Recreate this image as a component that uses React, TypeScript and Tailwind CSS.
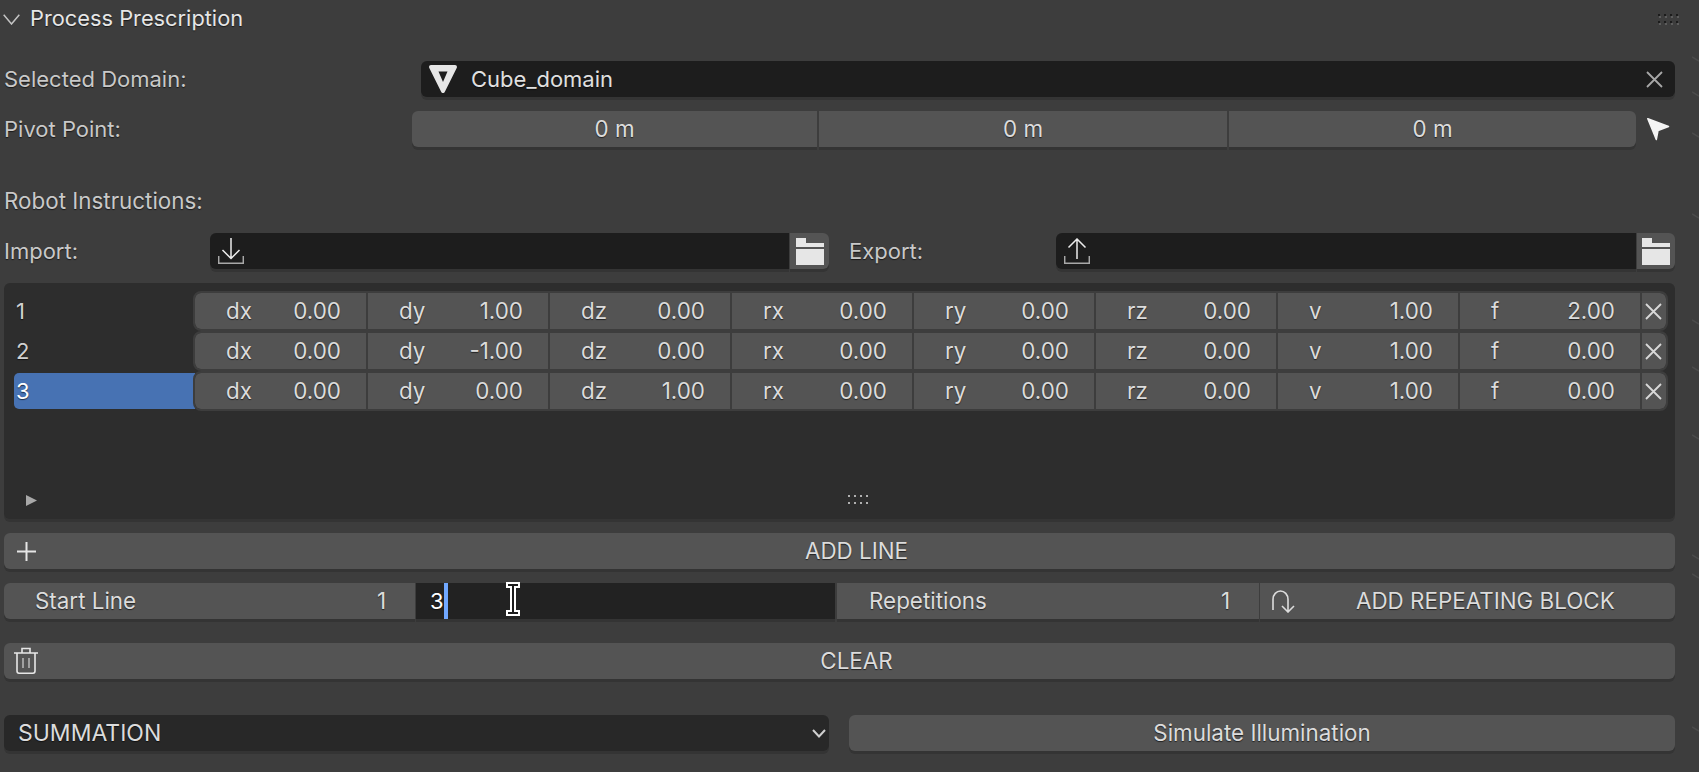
import type { ReactNode } from 'react'

const rows = [
  { n: '1', v: ['0.00', '1.00', '0.00', '0.00', '0.00', '0.00', '1.00', '2.00'] },
  { n: '2', v: ['0.00', '-1.00', '0.00', '0.00', '0.00', '0.00', '1.00', '0.00'] },
  { n: '3', v: ['0.00', '0.00', '1.00', '0.00', '0.00', '0.00', '1.00', '0.00'], active: true },
]
const names = ['dx', 'dy', 'dz', 'rx', 'ry', 'rz', 'v', 'f']

const shadow = '[text-shadow:0_1px_1px_rgba(0,0,0,0.6)]'
const btn = 'bg-[#545454] shadow-[0_3px_0_#343434] text-[#dcdcdc] text-[22.4px] h-9 flex items-center'
const field = 'bg-[#1d1d1d] shadow-[0_3px_0_#343434] h-9 flex items-center'

const Cross = ({ color = '#d8d8d8' }: { color?: string }) => (
  <svg width="17" height="17" viewBox="0 0 17 17" fill="none" stroke={color} strokeWidth="1.8"><path d="M1 1L16 16M16 1L1 16" /></svg>
)

const Folder = () => (
  <svg width="28" height="27" viewBox="0 0 28 27" fill="#e6e6e6">
    <path d="M0 0H10V5H28V9H0Z" />
    <rect y="11" width="28" height="16" />
  </svg>
)

const Transfer = ({ up }: { up?: boolean }) => (
  <svg width="26" height="26" viewBox="0 0 26 26" fill="none" strokeWidth="1.5">
    <path d={up ? 'M13 21V1M4.5 9.5L13 1L21.5 9.5' : 'M13 0V20M4.5 12L13 20.5L21.5 12'} stroke="#ececec" />
    <path d="M.7 18V25.2H25.3V18" stroke="#a8a8a8" />
  </svg>
)

const Grip = ({ color, under }: { color: string; under?: string }) => (
  <svg width="22" height="11" viewBox="0 0 22 11">
    {[0, 6, 12, 18].map(x => [0, 7].map(y => (
      <g key={`${x}-${y}`}>
        {under && <rect x={x + 1} y={y + 2} width="2" height="2" fill={under} />}
        <rect x={x} y={y} width="2" height="2" fill={color} />
      </g>
    )))}
  </svg>
)

const Label = ({ children, width }: { children: ReactNode; width: string }) => (
  <div className={`${width} shrink-0 text-[#c9c9c9] ${shadow}`}>{children}</div>
)

export default function App() {
  return (
    <div className="relative w-[1699px] h-[772px] overflow-hidden bg-[#3d3d3d] font-['Inter','Liberation_Sans',sans-serif] text-[22px] leading-none">
      {/* panel header */}
      <div className="h-[38px] pl-[3px] pr-[19px] flex items-center text-[#e6e6e6]">
        <svg width="17" height="11" viewBox="0 0 17 11" fill="none" stroke="#c4c4c4" strokeWidth="1.5"><path d="M.7.7L8.5 10L16.3.7" /></svg>
        <span className={`ml-[10px] text-[21.8px] ${shadow}`}>Process Prescription</span>
        <div className="ml-auto"><Grip color="#1c1c1c" under="#5c5c5c" /></div>
      </div>

      <div className="pl-1 pr-6">
        {/* domain */}
        <div className="mt-[23px] flex items-center">
          <Label width="w-[417px]">Selected Domain:</Label>
          <div className={`${field} flex-1 rounded-[6px] pl-2 pr-[12px] text-[#e0e0e0]`}>
            <svg width="28" height="28" viewBox="0 0 28 28" fill="#e6e6e6"><path fillRule="evenodd" d="M2 0H26C27.6 0 28.4 1.6 27.7 3L16 26.5C15 28.5 13 28.5 12 26.5L.3 3C-.4 1.6.4 0 2 0ZM9.5 6.5L14 17L18.5 6.5Z" /></svg>
            <span className={`ml-[14px] ${shadow}`}>Cube_domain</span>
            <div className="ml-auto"><Cross color="#a8a8a8" /></div>
          </div>
        </div>

        {/* pivot */}
        <div className="mt-[14px] flex items-center">
          <Label width="w-[408px]">Pivot Point:</Label>
          <div className="w-[1224px] flex gap-[2px]">
            <div className={`${btn} w-[405px] rounded-l-[6px] justify-center ${shadow}`}>0 m</div>
            <div className={`${btn} w-[408px] justify-center ${shadow}`}>0 m</div>
            <div className={`${btn} flex-1 rounded-r-[6px] justify-center ${shadow}`}>0 m</div>
          </div>
          <svg className="ml-[11px] mt-[1px]" width="23" height="23" viewBox="0 0 23 23" fill="#f4f4f4" stroke="#f4f4f4" strokeWidth="1.5" strokeLinejoin="round"><path d="M.8.8L21.5 8.5L11 12.5L9.3 21.5Z" /></svg>
        </div>

        <div className={`mt-[36px] h-9 flex items-center text-[#c9c9c9] text-[22.4px] ${shadow}`}>Robot Instructions:</div>

        {/* import / export */}
        <div className="mt-[14px] flex items-center">
          <Label width="w-[206px]">Import:</Label>
          <div className={`${field} w-[579px] rounded-l-[6px] pl-2`}><Transfer /></div>
          <div className={`${btn} w-[39px] ml-[1px] rounded-r-[6px] justify-center`}><Folder /></div>
          <Label width="w-[207px] ml-[20px]">Export:</Label>
          <div className={`${field} w-[580px] rounded-l-[6px] pl-2`}><Transfer up /></div>
          <div className={`${btn} flex-1 ml-[1px] rounded-r-[6px] justify-center`}><Folder /></div>
        </div>

        {/* list */}
        <div className="mt-[14px] h-[236px] rounded-[6px] bg-[#2d2d2d] shadow-[0_3px_0_#343434] pt-[10px] pl-[10px] pr-[9px] flex flex-col">
          <div className="flex flex-col gap-[4px]">
            {rows.map(r => (
              <div key={r.n} className="flex h-9">
                <div className={`w-[181px] rounded-l-[5px] flex items-center pl-[2px] ${shadow} ${r.active ? 'bg-[#4772b3] text-white' : 'text-[#d0d0d0]'}`}>{r.n}</div>
                <div className="flex-1 flex rounded-[6px] overflow-hidden outline-2 outline-[#3d3d3d] bg-[#3d3d3d] gap-[2px] text-[22.4px]">
                  {names.map((name, i) => (
                    <div key={name} className={`${i === 0 ? 'w-[171px]' : 'w-[180px]'} bg-[#545454] text-[#dcdcdc] flex items-center justify-between pl-[31px] pr-[25px] ${shadow}`}>
                      <span>{name}</span>
                      <span>{r.v[i]}</span>
                    </div>
                  ))}
                  <div className="flex-1 bg-[#545454] flex items-center justify-center pr-[1px]"><Cross /></div>
                </div>
              </div>
            ))}
          </div>
          <div className="mt-auto h-[38px] flex items-center pl-3">
            <svg width="11" height="11" viewBox="0 0 11 11" fill="#a8a8a8"><path d="M0 0L11 5.5L0 11Z" /></svg>
            <div className="ml-[811px]"><Grip color="#b0b0b0" /></div>
          </div>
        </div>

        {/* add line */}
        <div className={`${btn} mt-[14px] rounded-[6px] relative justify-center pl-[34px] ${shadow}`}>
          <svg className="absolute left-[13px]" width="19" height="19" viewBox="0 0 19 19" fill="none" stroke="#e6e6e6" strokeWidth="2"><path d="M9.5 0V19M0 9.5H19" /></svg>
          ADD LINE
        </div>

        {/* repeating block */}
        <div className="mt-[14px] flex">
          <div className={`${btn} w-[411px] rounded-l-[6px] justify-between pl-[31px] pr-[29px] ${shadow}`}><span>Start Line</span><span>1</span></div>
          <div className="relative w-[419px] ml-[1px] h-9 bg-[#222222] shadow-[0_3px_0_#343434] flex items-center pl-[14px] text-white">
            <span className={shadow}>3</span>
            <span className="w-[4px] h-9 bg-[#71a8ff]" />
            <svg className="absolute left-[90px] top-[-1px]" width="14" height="34" viewBox="0 0 14 34" fill="#1c1c1c" stroke="#ffffff" strokeWidth="2"><path d="M1 1H13V5H9V29H13V33H1V29H5V5H1Z" /></svg>
          </div>
          <div className={`${btn} w-[422px] ml-[2px] justify-between pl-[32px] pr-[29px] ${shadow}`}><span>Repetitions</span><span>1</span></div>
          <div className={`${btn} flex-1 ml-[1px] rounded-r-[6px] relative ${shadow}`}>
            <svg className="absolute left-[12px]" width="26" height="23" viewBox="0 0 26 23" fill="none" stroke="#dcdcdc" strokeWidth="1.6"><path d="M1 20V9.5C1 4.5 4.5 1 8.5 1C12.5 1 16 4.5 16 9.5V22M10 16L16 22L22 16" /></svg>
            <span className="ml-[96px]">ADD REPEATING BLOCK</span>
          </div>
        </div>

        {/* clear */}
        <div className={`${btn} mt-[24px] rounded-[6px] relative justify-center pl-[34px] ${shadow}`}>
          <svg className="absolute left-[10px] top-[4px]" width="24" height="27" viewBox="0 0 24 27" fill="none" stroke="#e6e6e6" strokeWidth="1.6">
            <path d="M0 6H24M8 6V1.5H16V6M3 6V24C3 25.5 4 26.2 5 26.2H19C20 26.2 21 25.5 21 24V6" />
            <path d="M9 11V21M15 11V21" stroke="#a0a0a0" strokeWidth="2" />
          </svg>
          CLEAR
        </div>

        {/* mode + simulate */}
        <div className="mt-[36px] flex">
          <div className="w-[825px] h-9 rounded-[6px] bg-[#282828] shadow-[0_3px_0_#343434] flex items-center pl-[14px] pr-[3px] text-[#dcdcdc] text-[23px]">
            <span className={shadow}>SUMMATION</span>
            <svg className="ml-auto" width="14" height="9" viewBox="0 0 14 9" fill="none" stroke="#d0d0d0" strokeWidth="2"><path d="M1 1L7 7.5L13 1" /></svg>
          </div>
          <div className={`${btn} flex-1 ml-[20px] rounded-[6px] justify-center ${shadow}`}>Simulate Illumination</div>
        </div>
      </div>

      {/* neighbouring tab edge, barely visible at the window border */}
      <svg className="absolute right-0 top-0" width="7" height="772" viewBox="0 0 7 772" fill="none" stroke="#4c4c4c" strokeWidth="1.5">
        {[57, 92, 133, 214, 320, 367, 435, 555, 574, 727].map(y => (
          <path key={y} d={`M0 ${y}L7 ${y + 4}`} />
        ))}
      </svg>
    </div>
  )
}
